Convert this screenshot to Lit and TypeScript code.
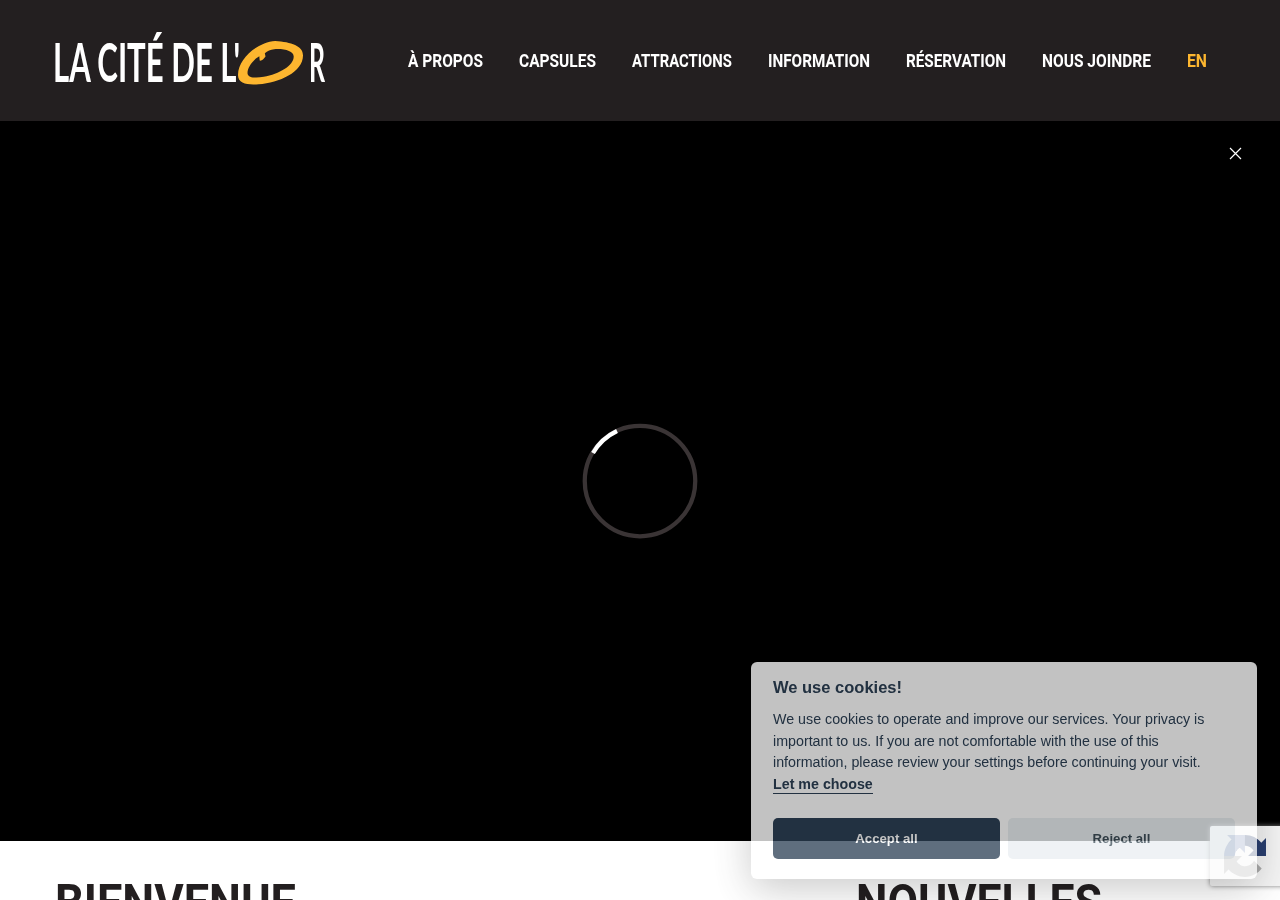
import { LitElement, html, css } from "lit";
import { customElement } from "lit/decorators.js";
import { styleMap } from "lit/directives/style-map.js";

const ctx = document.createElement("canvas").getContext("2d")!;

/* Squeezes real text to the measured width of the reference's condensed face. */
function fit(text: string, font: string, width: number) {
  ctx.font = font;
  const sx = width / ctx.measureText(text).width;
  return html`<span class="fit" style=${styleMap({ width: width + "px" })}><span class="fit-in" style=${styleMap({ transform: `scaleX(${sx})` })}>${text}</span></span>`;
}

const NAV = [
  { t: "À PROPOS", w: 75 },
  { t: "CAPSULES", w: 77 },
  { t: "ATTRACTIONS", w: 100 },
  { t: "INFORMATION", w: 102 },
  { t: "RÉSERVATION", w: 100 },
  { t: "NOUS JOINDRE", w: 109 },
];
const NAV_FONT = "700 19px Roboto";
const LOGO_FONT = "700 53px Lato";
const H_FONT = "700 50px Roboto";

@customElement("app-root")
export class AppRoot extends LitElement {
  static styles = css`
    :host { display: block; height: 900px; overflow: hidden; position: relative; background: #fff; font-family: "Liberation Sans", Arial, sans-serif; }
    * { box-sizing: border-box; }
    .fit { display: inline-block; white-space: nowrap; }
    .fit-in { display: inline-block; transform-origin: left center; }
    .header { height: 121px; background: #231f20; display: flex; align-items: center; justify-content: space-between; padding: 0 73px 0 53px; }
    .logo { display: flex; align-items: center; width: 272px; height: 53px; color: #fff; font-family: Lato, sans-serif; font-weight: 700; font-size: 53px; line-height: 53px; position: relative; top: 1px; }
    .logo svg { margin: 3px 6px 0 -3px; flex: none; }
    .nav { display: flex; gap: 36px; }
    .nav a { color: #fff; font-family: Roboto, sans-serif; font-weight: 700; font-size: 19px; line-height: 24px; }
    .nav a.lang { color: #fdb62f; }
    .hero { height: 720px; background: #000; display: flex; align-items: center; justify-content: center; position: relative; }
    .close { position: absolute; top: 26px; right: 38px; width: 13px; height: 13px; }
    .columns { display: grid; grid-template-columns: 801px 1fr; padding: 33px 0 0 55px; }
    h2 { margin: 0; font-family: Roboto, sans-serif; font-weight: 700; font-size: 50px; line-height: 58px; color: #231f20; }
    .badge { position: absolute; left: 1210px; top: 826px; width: 256px; height: 60px; background: #f4f4f4; border-radius: 2px; box-shadow: 0 0 5px gray; display: flex; padding-left: 14px; align-items: center; }
    .cookie { position: absolute; left: 751px; top: 662px; width: 506px; height: 217px; background: #fff; color: #2d4156; border-radius: 6px; opacity: 0.76; filter: blur(0.5px); box-shadow: 0 10px 40px rgba(2,2,3,.28); padding: 15px 22px 20px; }
    .title { font-size: 16.5px; line-height: 20px; font-weight: 700; }
    .desc { font-size: 14.25px; line-height: 21.6px; margin-top: 12px; height: 86px; }
    .desc b { display: inline-block; line-height: 18px; border-bottom: 1px solid #2d4156; }
    .btns { display: grid; grid-template-columns: 227px 227px; gap: 8px; margin-top: 23px; }
    .btn { height: 41px; padding-bottom: 1px; border-radius: 5px; display: flex; align-items: center; justify-content: center; font-size: 13.2px; font-weight: 700; }
    .primary { background: #2d4156; color: #fff; }
    .secondary { background: #eaeff2; color: #40505a; }
  `;

  render() {
    return html`
      <header class="header">
        <div class="logo">
          ${fit("LA CITÉ DE L'", LOGO_FONT, 188)}
          <svg width="65" height="44" viewBox="10 13 189 119" preserveAspectRatio="none">
            <path fill="#fdb62f" fill-rule="evenodd" d="M118 13C68 16 10 60 10 105C10 130 40 132 70 130C130 126 199 97 199 52C199 26 165 16 118 13ZM62 60C45 75 36 90 38 102C40 112 60 114 85 110C130 102 172 80 172 55C172 40 145 33 115 35C105 36 95 40 88 46L90 55C85 62 78 68 73 66L72 54Z"/>
          </svg>
          ${fit("R", LOGO_FONT, 16)}
        </div>
        <nav class="nav">
          ${NAV.map((n) => html`<a>${fit(n.t, NAV_FONT, n.w)}</a>`)}
          <a class="lang">${fit("EN", NAV_FONT, 20)}</a>
        </nav>
      </header>
      <section class="hero">
        <svg class="close" viewBox="0 0 13 13"><path d="M1 1 12 12M12 1 1 12" stroke="#fff" stroke-width="1.2" fill="none"/></svg>
        <svg width="116" height="116" viewBox="0 0 116 116">
          <circle cx="58" cy="58" r="55.25" fill="none" stroke="#3a3435" stroke-width="4.25"/>
          <path d="M11 30 A55.25 55.25 0 0 1 35 8" fill="none" stroke="#fff" stroke-width="4.25"/>
        </svg>
      </section>
      <section class="columns">
        <h2>${fit("BIENVENUE", H_FONT, 241)}</h2>
        <h2>${fit("NOUVELLES", H_FONT, 246)}</h2>
      </section>
      <div class="badge">
        <svg width="42" height="42" viewBox="0 0 64 64">
          <path fill="#2a3f70" d="M64 31.955l-.033-1.37V4.687l-7.16 7.16C50.948 4.674 42.033.093 32.05.093c-10.4 0-19.622 4.96-25.458 12.64l11.736 11.86a15.55 15.55 0 0 1 4.754-5.334c2.05-1.6 4.952-2.906 8.968-2.906.485 0 .86.057 1.135.163 4.976.393 9.288 3.14 11.828 7.124l-8.307 8.307c10.522-.04 22.4-.066 27.295 0"/>
          <path fill="#7d8fb8" d="M32 .048l-1.37.033H4.73l7.16 7.16C4.716 13.096.136 22.01.136 32c0 10.4 4.96 19.622 12.64 25.458l11.86-11.736a15.55 15.55 0 0 1-5.334-4.754c-1.6-2.05-2.906-4.952-2.906-8.968 0-.485.057-.86.163-1.135.393-4.976 3.14-9.288 7.124-11.828l8.307 8.307c-.04-10.522-.066-22.4 0-27.295"/>
          <path fill="#ababab" d="M.05 32l.033 1.37v25.898l7.16-7.16c5.86 7.173 14.775 11.754 24.757 11.754 10.4 0 19.622-4.96 25.458-12.64L45.72 39.36a15.55 15.55 0 0 1-4.754 5.334c-2.05 1.6-4.952 2.906-8.968 2.906-.485 0-.86-.057-1.135-.163-4.976-.393-9.288-3.14-11.828-7.124l8.307-8.307c-10.522.04-22.4.066-27.295 0"/>
        </svg>
      </div>
      <div class="cookie">
        <div class="title">We use cookies!</div>
        <div class="desc">We use cookies to operate and improve our services. Your privacy is important to us. If you are not comfortable with the use of this information, please review your settings before continuing your visit. <b>Let me choose</b></div>
        <div class="btns">
          <div class="btn primary">Accept all</div>
          <div class="btn secondary">Reject all</div>
        </div>
      </div>
    `;
  }
}
